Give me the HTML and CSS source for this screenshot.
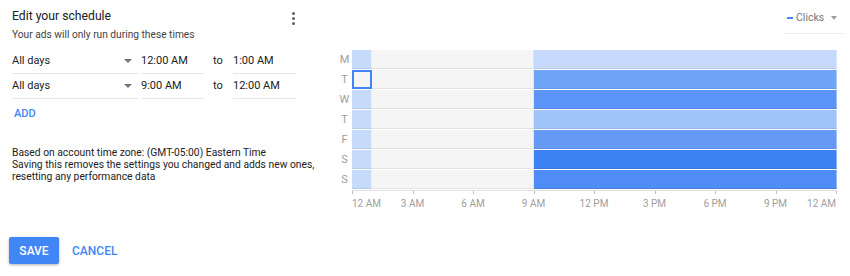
FILE: index.html
```html
<!DOCTYPE html>
<html lang="en">
<head>
    <meta charset="UTF-8">
    <title>Edit your schedule</title>
    <link rel="stylesheet" href="styles.css">
</head>
<body>
    <div class="page">
        <div class="editor">
            <div class="editor-head">
                <div class="title">Edit your schedule</div>
                <div class="kebab"><span></span><span></span><span></span></div>
            </div>
            <div class="subtitle">Your ads will only run during these times</div>

            <div class="ranges">
                <div class="range">
                    <div class="field days">All days <span class="caret"></span></div>
                    <div class="field time">12:00 AM</div>
                    <div class="to">to</div>
                    <div class="field time">1:00 AM</div>
                </div>
                <div class="range">
                    <div class="field days">All days <span class="caret"></span></div>
                    <div class="field time">9:00 AM</div>
                    <div class="to">to</div>
                    <div class="field time">12:00 AM</div>
                </div>
            </div>

            <div class="add">ADD</div>

            <div class="note">
                Based on account time zone: (GMT-05:00) Eastern Time<br>
                Saving this removes the settings you changed and adds new ones,<br>
                resetting any performance data
            </div>

            <div class="actions">
                <button class="save">SAVE</button>
                <button class="cancel">CANCEL</button>
            </div>
        </div>

        <div class="chart">
            <div class="chart-head">
                <div class="metric"><span class="dash"></span>Clicks <span class="caret"></span></div>
            </div>
            <div class="heatmap">
                <div class="row">
                    <div class="day">M</div>
                    <div class="cells">
                        <div class="cell first"></div><div class="cell off"></div><div class="cell on l1"></div>
                    </div>
                </div>
                <div class="row">
                    <div class="day">T</div>
                    <div class="cells">
                        <div class="cell first picked"></div><div class="cell off"></div><div class="cell on l4"></div>
                    </div>
                </div>
                <div class="row">
                    <div class="day">W</div>
                    <div class="cells">
                        <div class="cell first"></div><div class="cell off"></div><div class="cell on l5"></div>
                    </div>
                </div>
                <div class="row">
                    <div class="day">T</div>
                    <div class="cells">
                        <div class="cell first"></div><div class="cell off"></div><div class="cell on l2"></div>
                    </div>
                </div>
                <div class="row">
                    <div class="day">F</div>
                    <div class="cells">
                        <div class="cell first"></div><div class="cell off"></div><div class="cell on l3"></div>
                    </div>
                </div>
                <div class="row">
                    <div class="day">S</div>
                    <div class="cells">
                        <div class="cell first"></div><div class="cell off"></div><div class="cell on l7"></div>
                    </div>
                </div>
                <div class="row">
                    <div class="day">S</div>
                    <div class="cells">
                        <div class="cell first"></div><div class="cell off"></div><div class="cell on l6"></div>
                    </div>
                </div>
            </div>
            <div class="axis">
                <div class="tick"><span>12 AM</span></div>
                <div class="tick"><span>3 AM</span></div>
                <div class="tick"><span>6 AM</span></div>
                <div class="tick"><span>9 AM</span></div>
                <div class="tick"><span>12 PM</span></div>
                <div class="tick"><span>3 PM</span></div>
                <div class="tick"><span>6 PM</span></div>
                <div class="tick"><span>9 PM</span></div>
                <div class="tick"><span>12 AM</span></div>
            </div>
        </div>
    </div>
</body>
</html>
```

FILE: styles.css
```css
body {
    margin: 0;
    background: #fff;
    font-family: 'Roboto', 'Liberation Sans', sans-serif;
    color: #212121;
}
.page {
    display: flex;
    height: 276px;
}
.editor {
    width: 332px;
    padding: 7px 0 0 12px;
    box-sizing: border-box;
}
.editor-head {
    display: flex;
    justify-content: space-between;
    width: 284px;
    height: 18px;
}
.title {
    font-size: 12.2px;
    line-height: 18px;
}
.kebab {
    display: flex;
    flex-direction: column;
    gap: 2px;
    padding: 5px 1px 0;
}
.kebab span {
    width: 3px;
    height: 3px;
    border-radius: 50%;
    background: #616161;
}
.subtitle {
    font-size: 10.2px;
    line-height: 14px;
    margin-top: 3px;
    color: #424242;
}
.ranges {
    margin-top: 8px;
}
.range {
    display: flex;
    align-items: flex-start;
    height: 25px;
}
.field {
    font-size: 11px;
    line-height: 14px;
    height: 24px;
    padding-top: 4px;
    box-sizing: border-box;
    border-bottom: 1px solid #e6e6e6;
}
.days {
    width: 126px;
    position: relative;
}
.days .caret {
    position: absolute;
    right: 6px;
    top: 9px;
}
.caret {
    display: inline-block;
    width: 0;
    height: 0;
    border-left: 4px solid transparent;
    border-right: 4px solid transparent;
    border-top: 4px solid #757575;
}
.time {
    width: 63px;
    margin-left: 3px;
}
.to {
    font-size: 11px;
    line-height: 14px;
    padding-top: 4px;
    width: 26px;
    padding-left: 9px;
    box-sizing: border-box;
}
.add {
    font-size: 11px;
    font-weight: 500;
    color: #4285f4;
    margin: 7px 0 0 2px;
    line-height: 14px;
}
.note {
    font-size: 10.3px;
    line-height: 12px;
    margin-top: 26px;
    color: #212121;
}
.actions {
    display: flex;
    align-items: center;
    gap: 13px;
    margin: 54px 0 0 -3px;
}
button {
    font-family: inherit;
    font-size: 12px;
    font-weight: 500;
    border: none;
    cursor: pointer;
    height: 27px;
}
.save {
    width: 50px;
    background: #4285f4;
    color: #fff;
    border-radius: 2px;
    box-shadow: 0 1px 3px rgba(0, 0, 0, 0.3);
}
.cancel {
    background: none;
    color: #4285f4;
    padding: 0;
}
.chart {
    width: 518px;
}
.chart-head {
    height: 50px;
    display: flex;
    justify-content: flex-end;
}
.metric {
    width: 61px;
    height: 26px;
    margin: 8px 5px 0 0;
    box-sizing: border-box;
    border-bottom: 1px solid #eeeeee;
    font-size: 10.5px;
    line-height: 14px;
    color: #757575;
    display: flex;
    align-items: center;
    padding: 0 0 5px 3px;
}
.metric .dash {
    width: 6px;
    height: 2px;
    background: #4285f4;
    margin-right: 3px;
}
.metric .caret {
    border-top-color: #9e9e9e;
    border-left-width: 3.5px;
    border-right-width: 3.5px;
    margin-left: 7px;
}
.row {
    display: flex;
    height: 20px;
}
.day {
    width: 20px;
    font-size: 11px;
    line-height: 20px;
    color: #9e9e9e;
    text-align: center;
    padding-left: 5px;
    box-sizing: border-box;
}
.cells {
    display: flex;
    width: 485px;
    height: 19px;
}
.cell {
    height: 19px;
    box-sizing: border-box;
    border-bottom: 1px solid rgba(0, 0, 0, 0.07);
}
.first {
    width: 20px;
    background: #c6dafc;
    border-right: 1px solid rgba(255, 255, 255, 0.6);
}
.picked {
    background: #f5f5f5;
    border: 2px solid #4285f4;
}
.off {
    width: 162px;
    background: #f5f5f5;
    border-right: 1px solid #e6e6e6;
}
.on {
    flex: 1;
    border-right: 1px solid rgba(255, 255, 255, 0.4);
}
.l1 { background: #c6d9fd; }
.l2 { background: #a0c3fa; }
.l3 { background: #6499f6; }
.l4 { background: #6fa5f8; }
.l5 { background: #5b95f7; }
.l6 { background: #4f8cf6; }
.l7 { background: #3d82f5; }
.axis {
    display: flex;
    justify-content: space-between;
    width: 485px;
    margin-left: 20px;
    border-top: 1px solid #e0e0e0;
    height: 30px;
}
.tick {
    width: 1px;
    height: 3px;
    background: #bdbdbd;
    position: relative;
}
.tick span {
    position: absolute;
    top: 6px;
    left: 0;
    transform: translateX(-50%);
    font-size: 10px;
    line-height: 14px;
    color: #9e9e9e;
    white-space: nowrap;
}
.tick:first-child span {
    transform: none;
}
.tick:last-child span {
    transform: translateX(-100%);
}
```
